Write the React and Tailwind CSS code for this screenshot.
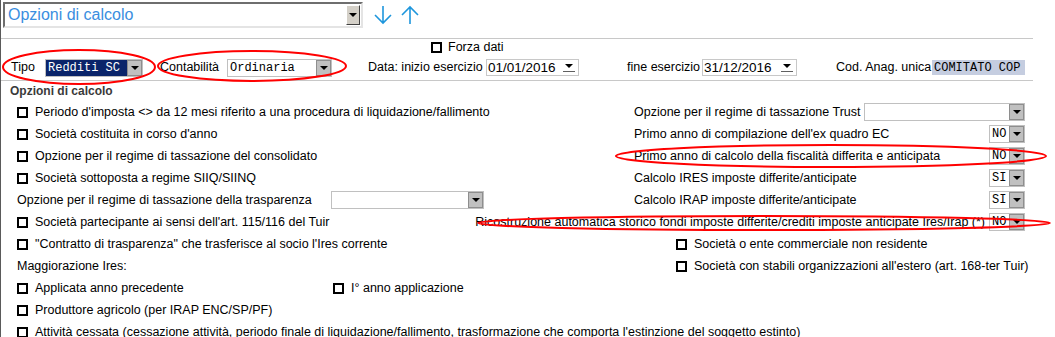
import React from "react";

function Arrow({ className }) {
  return <span className={"inline-block w-0 h-0 border-l-[4px] border-r-[4px] border-t-[4px] border-l-transparent border-r-transparent border-t-black " + (className || "")} />;
}

function Check() {
  return <span className="inline-block w-[11px] h-[11px] border-2 border-black bg-white shrink-0 mr-[7px]" />;
}

function Combo({ w, value, navy }) {
  return (
    <div className={`flex h-[18px] border border-[#c0c0c0] shrink-0 ${w} ${navy ? "bg-[#0a246a] text-white" : "bg-white text-black"}`}>
      <span className="flex-1 flex items-center pl-[2px] font-['Liberation_Mono'] text-[12px] overflow-hidden whitespace-nowrap">{value}</span>
      <span className="w-[15px] flex items-center justify-center bg-[#c0c0c0] border border-[#8e8e8e]">
        <Arrow />
      </span>
    </div>
  );
}

function DateField({ w, value }) {
  return (
    <div className={`flex h-[17px] border border-[#c8c8c8] bg-white shrink-0 ${w}`}>
      <span className="flex-1 flex items-center pl-[1px] text-[13.5px] leading-none">{value}</span>
      <span className="w-[16px] flex flex-col items-center justify-center mr-[1px]">
        <Arrow />
        <span className="w-[12px] h-[1px] bg-[#606060] mt-[3px]" />
      </span>
    </div>
  );
}

function Row({ left, right }) {
  return (
    <div className="flex h-[22px] items-center w-[1024px] whitespace-nowrap">
      <div className="flex-1 flex items-center pl-[16px]">{left}</div>
      {right}
    </div>
  );
}

function Right({ label, value, wide }) {
  return (
    <div className="w-[391px] flex items-center">
      <span className="flex-1">{label}</span>
      <Combo w={wide ? "w-[161px]" : "w-[36px]"} value={value} />
    </div>
  );
}

export default function App() {
  return (
    <div className="relative w-[1055px] h-[337px] overflow-hidden bg-white border-l border-[#5a5a5a] font-['Liberation_Sans'] text-[12.5px] text-black">
      {/* barra superiore */}
      <div className="flex items-center h-[34px] pl-[2px] pb-[4px]">
        <div className="flex w-[360px] h-[26px] border-2 border-t-[#6e6e6e] border-l-[#6e6e6e] border-b-[#e4e4e4] border-r-[#e4e4e4] bg-white">
          <span className="flex-1 flex items-center pl-[3px] text-[16px] text-[#3a8ee0]">Opzioni di calcolo</span>
          <span className="w-[14px] my-[1px] mr-[1px] flex items-center justify-center bg-[#d4d0c8] border border-t-white border-l-white border-b-[#404040] border-r-[#404040]">
            <Arrow />
          </span>
        </div>
        <svg className="ml-[10px]" width="20" height="20" viewBox="0 0 20 20" fill="none" stroke="#1e96dc" strokeWidth="1.6">
          <path d="M10 1V18M2 10L10 18L18 10" />
        </svg>
        <svg className="ml-[7px]" width="20" height="20" viewBox="0 0 20 20" fill="none" stroke="#1e96dc" strokeWidth="1.6">
          <path d="M10 19V2M2 10L10 2L18 10" />
        </svg>
      </div>

      <div className="w-[1032px] border-t border-[#c8c8c8] mt-[4px]">
        <div className="flex items-center h-[16px] pl-[430px]">
          <Check />
          <span className="-ml-[1px]">Forza dati</span>
        </div>
        <div className="flex items-center h-[25px] pl-[10px] whitespace-nowrap">
          <span className="w-[34px]">Tipo</span>
          <Combo w="w-[98px]" value="Redditi SC" navy />
          <span className="ml-[17px] w-[67px]">Contabilità</span>
          <Combo w="w-[105px]" value="Ordinaria" />
          <span className="ml-[36px] w-[118px]">Data: inizio esercizio</span>
          <DateField w="w-[93px]" value="01/01/2016" />
          <span className="ml-[48px] w-[75px]">fine esercizio</span>
          <DateField w="w-[95px]" value="31/12/2016" />
          <span className="ml-[39px] w-[96px]">Cod. Anag. unica</span>
          <span className="w-[93px] h-[15px] bg-[#c5cde0] flex items-center pl-[2px] font-['Liberation_Mono'] text-[12px]">COMITATO COP</span>
        </div>
      </div>

      <div className="border-t border-[#c8c8c8] w-[1032px]">
        <div className="h-[20px] flex items-center pl-[9px] font-bold text-[12px] text-[#3a3a3a]">Opzioni di calcolo</div>

        <Row
          left={<><Check />Periodo d'imposta &lt;&gt; da 12 mesi riferito a una procedura di liquidazione/fallimento</>}
          right={<Right label="Opzione per il regime di tassazione Trust" value="" wide />}
        />
        <Row
          left={<><Check />Società costituita in corso d'anno</>}
          right={<Right label="Primo anno di compilazione dell'ex quadro EC" value="NO" />}
        />
        <Row
          left={<><Check />Opzione per il regime di tassazione del consolidato</>}
          right={<Right label="Primo anno di calcolo della fiscalità differita e anticipata" value="NO" />}
        />
        <Row
          left={<><Check />Società sottoposta a regime SIIQ/SIINQ</>}
          right={<Right label="Calcolo IRES imposte differite/anticipate" value="SI" />}
        />
        <Row
          left={<><span className="w-[314px]">Opzione per il regime di tassazione della trasparenza</span><Combo w="w-[153px]" value="" /></>}
          right={<Right label="Calcolo IRAP imposte differite/anticipate" value="SI" />}
        />
        <Row
          left={<><Check />Società partecipante ai sensi dell'art. 115/116 del Tuir</>}
          right={
            <div className="flex items-center justify-end">
              <span className="mr-[4px]">Ricostruzione automatica storico fondi imposte differite/crediti imposte anticipate Ires/Irap (*)</span>
              <Combo w="w-[36px]" value="NO" />
            </div>
          }
        />
        <Row
          left={<><Check />"Contratto di trasparenza" che trasferisce al socio l'Ires corrente</>}
          right={<div className="w-[391px] flex items-center pl-[42px]"><Check />Società o ente commerciale non residente</div>}
        />
        <Row
          left={<span>Maggiorazione Ires:</span>}
          right={<div className="w-[391px] flex items-center pl-[42px]"><Check />Società con stabili organizzazioni all'estero (art. 168-ter Tuir)</div>}
        />
        <Row
          left={<><span className="w-[316px] flex items-center"><Check />Applicata anno precedente</span><Check />I° anno applicazione</>}
        />
        <Row left={<><Check />Produttore agricolo (per IRAP ENC/SP/PF)</>} />
        <Row
          left={<><Check />Attività cessata (cessazione attività, periodo finale di liquidazione/fallimento, trasformazione che comporta l'estinzione del soggetto estinto)</>}
        />
      </div>

      {/* annotazioni rosse */}
      <svg className="absolute inset-0 pointer-events-none" width="1055" height="337" fill="none" stroke="#ff0000" strokeWidth="2">
        <ellipse cx="78" cy="67" rx="76" ry="17" />
        <ellipse cx="251" cy="66" rx="94" ry="15" />
        <ellipse cx="830" cy="156" rx="215" ry="11" />
        <ellipse cx="763" cy="223" rx="286" ry="7" />
      </svg>
    </div>
  );
}
